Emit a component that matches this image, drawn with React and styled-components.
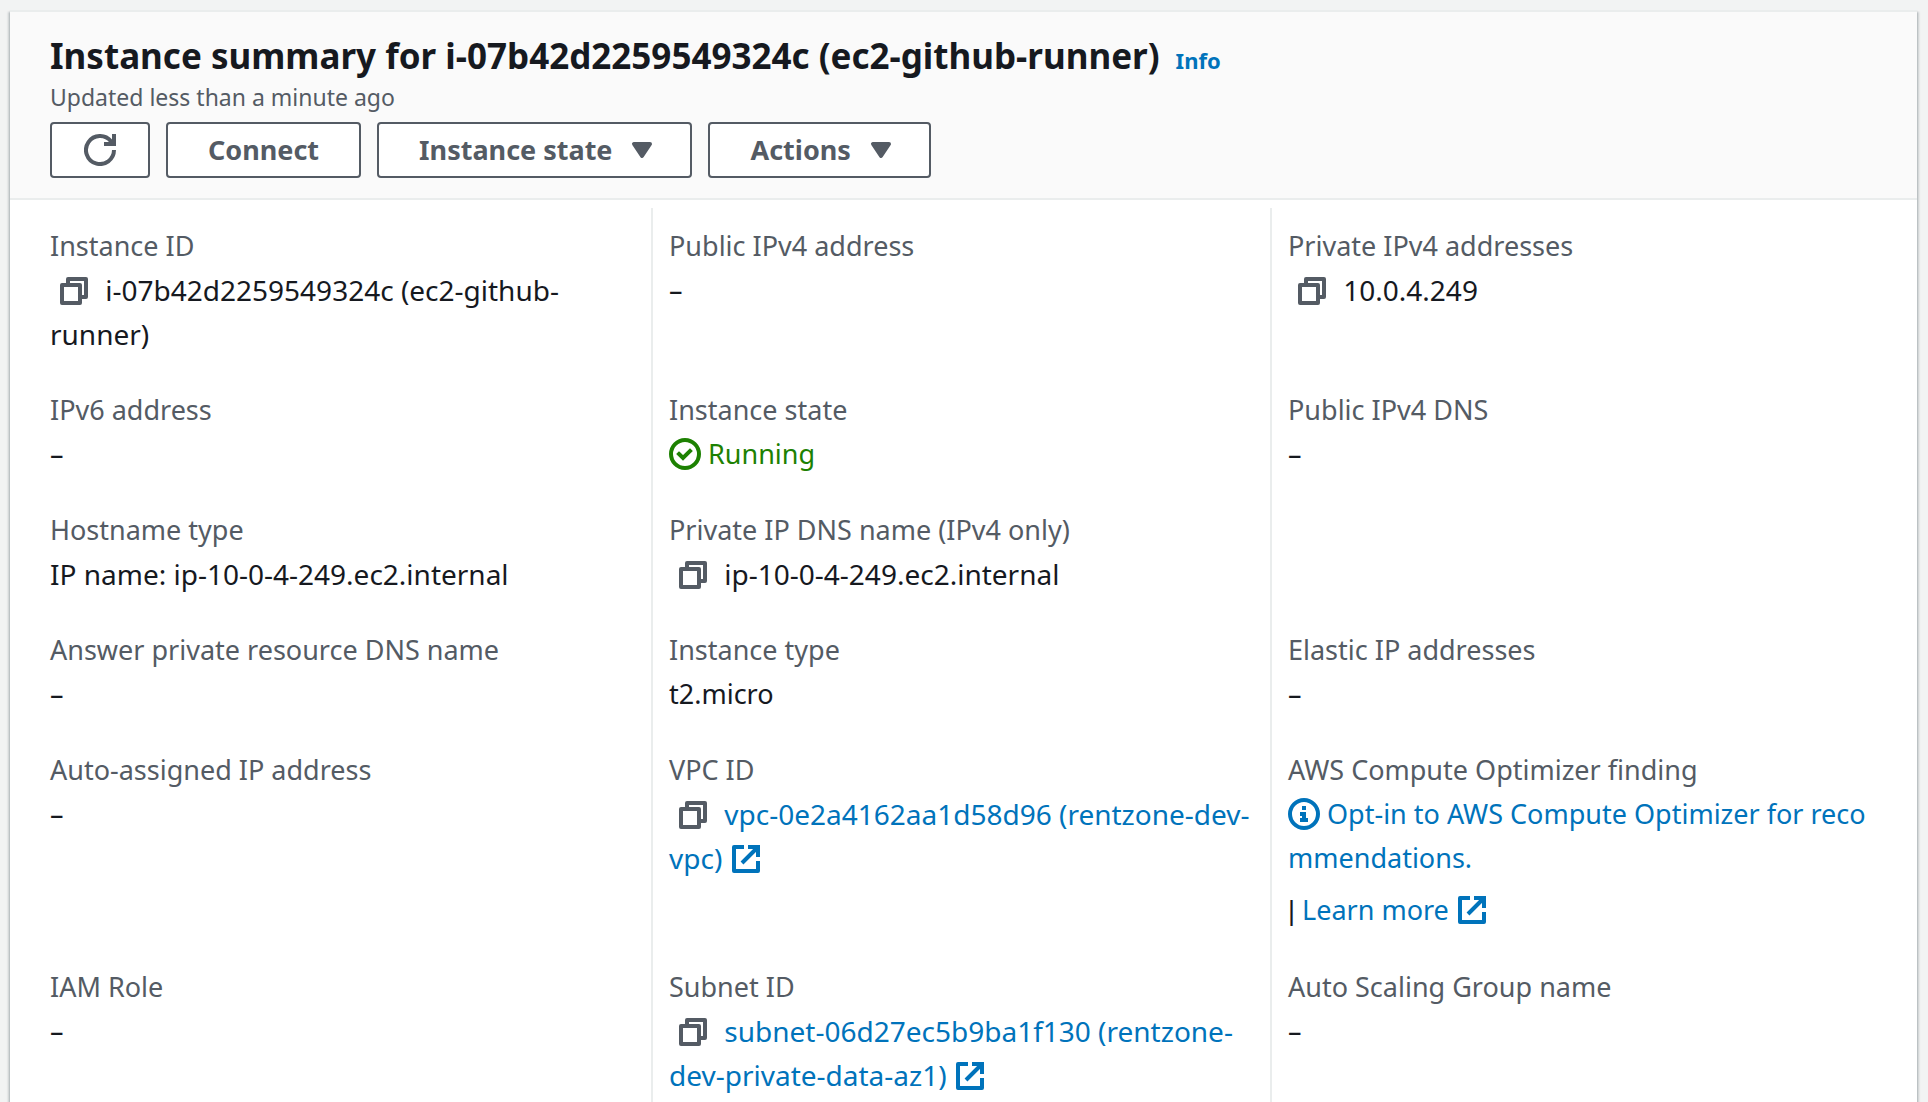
import React from "react";
import styled, { createGlobalStyle } from "styled-components";

const GlobalStyle = createGlobalStyle`
  *, *::before, *::after { box-sizing: border-box; }
  body {
    margin: 0;
    background: #f2f3f3;
    color: #16191f;
    font-family: "Noto Sans", "Open Sans", sans-serif;
    font-size: 27px;
    line-height: 44px;
  }
`;

const Page = styled.main`
  height: 100vh;
  overflow: hidden;
  padding: 10px 11px 0 10px;
`;

const Panel = styled.section`
  min-height: 100%;
  background: #ffffff;
  border-top: 2px solid #eaeded;
  box-shadow:
    0 2px 2px rgba(0, 28, 36, 0.3),
    2px 2px 2px rgba(0, 28, 36, 0.15),
    -2px 2px 2px rgba(0, 28, 36, 0.15);
`;

const Header = styled.header`
  padding: 22px 40px 20px;
  background: #fafafa;
  border-bottom: 2px solid #eaeded;
`;

const TitleRow = styled.div`
  display: flex;
  align-items: baseline;
  gap: 16px;
`;

const Title = styled.h1`
  margin: 0;
  font-size: 35px;
  font-weight: 700;
  line-height: 44px;
`;

const Link = styled.a`
  color: #0073bb;
  text-decoration: none;
  word-break: ${(p) => (p.$breakAll ? "break-all" : "normal")};
`;

const InfoLink = styled(Link)`
  font-size: 22px;
  font-weight: 700;
  line-height: 24px;
`;

const Updated = styled.p`
  margin: 0;
  color: #545b64;
  font-size: 23px;
  line-height: 38px;
`;

const Toolbar = styled.div`
  display: flex;
  flex-wrap: wrap;
  gap: 16px;
  margin-top: 6px;
`;

const Button = styled.button`
  display: inline-flex;
  align-items: center;
  gap: 14px;
  height: 56px;
  padding: 0 ${(p) => (p.$endIcon || p.$iconOnly ? "32px" : "40px")} 0
    ${(p) => (p.$iconOnly ? "32px" : "40px")};
  border: 2px solid #545b64;
  border-radius: 4px;
  background: #ffffff;
  color: #545b64;
  font: inherit;
  font-weight: 700;
  cursor: pointer;
`;

const Grid = styled.dl`
  display: grid;
  grid-template-columns: repeat(3, minmax(0, 1fr));
  margin: 0;
  padding: 8px 28px 8px 22px;
`;

const Cell = styled.div`
  padding: 16px 12px 16px 16px;
  border-left: 2px solid #eaeded;

  &:nth-child(3n + 1) {
    border-left-color: transparent;
  }
`;

const Label = styled.dt`
  color: #545b64;
`;

const Value = styled.dd`
  margin: 0;
  font-size: ${(p) => (p.$identifier ? "28px" : "27px")};
`;

const Status = styled.span`
  color: #1d8102;
`;

const LearnMore = styled.div`
  margin-top: 8px;
`;

const Separator = styled.span`
  font-family: "Liberation Sans", Arial, sans-serif;
`;

const IconButton = styled.button`
  padding: 0 8px;
  border: 0;
  background: none;
  color: #545b64;
  font: inherit;
  line-height: 32px;
  cursor: pointer;
`;

const Svg = styled.svg`
  width: 32px;
  height: 32px;
  flex: none;
  vertical-align: -6px;
  fill: none;
  stroke: currentColor;
  stroke-width: 2;
`;

const Icon = ({ children }) => (
  <Svg viewBox="0 0 16 16" aria-hidden="true">
    {children}
  </Svg>
);

const RefreshIcon = () => (
  <Icon>
    <path d="M10 5h5V0" />
    <path d="M15 8a7 7 0 1 1-1.500-4.330L14.600 5" />
  </Icon>
);

const CaretIcon = () => (
  <Icon>
    <path d="M4 5h8l-4 6z" fill="currentColor" strokeLinejoin="round" />
  </Icon>
);

const CopyIcon = () => (
  <Icon>
    <path d="M2 5h9v9H2z" strokeLinejoin="round" />
    <path d="M5 5V2h9v9h-3" strokeLinejoin="round" />
  </Icon>
);

const ExternalIcon = () => (
  <Icon>
    <path d="M7 2H2v12h12V9" strokeLinejoin="round" />
    <path d="M9 2h5v5M14 2l-8 8" />
  </Icon>
);

const CheckIcon = () => (
  <Icon>
    <circle cx="8" cy="8" r="7" />
    <path d="M5 8l2 2 3.500-3.500" strokeLinecap="square" />
  </Icon>
);

const InfoIcon = () => (
  <Icon>
    <circle cx="8" cy="8" r="7" />
    <path d="M8 11V8H6M6 11h4M8 6V4" />
  </Icon>
);

const Copy = ({ children, what }) => (
  <>
    <IconButton type="button" aria-label={`Copy ${what}`}>
      <CopyIcon />
    </IconButton>{" "}
    {children}
  </>
);

const fields = [
  {
    label: "Instance ID",
    identifier: true,
    value: <Copy what="instance ID">i-07b42d2259549324c (ec2-github-runner)</Copy>,
  },
  { label: "Public IPv4 address", value: "–" },
  {
    label: "Private IPv4 addresses",
    identifier: true,
    value: <Copy what="private IPv4 address">10.0.4.249</Copy>,
  },
  { label: "IPv6 address", value: "–" },
  {
    label: "Instance state",
    value: (
      <Status>
        <CheckIcon /> Running
      </Status>
    ),
  },
  { label: "Public IPv4 DNS", value: "–" },
  {
    label: "Hostname type",
    identifier: true,
    value: "IP name: ip-10-0-4-249.ec2.internal",
  },
  {
    label: "Private IP DNS name (IPv4 only)",
    identifier: true,
    value: <Copy what="private DNS name">ip-10-0-4-249.ec2.internal</Copy>,
  },
  null,
  { label: "Answer private resource DNS name", value: "–" },
  { label: "Instance type", value: "t2.micro" },
  { label: "Elastic IP addresses", value: "–" },
  { label: "Auto-assigned IP address", value: "–" },
  {
    label: "VPC ID",
    identifier: true,
    value: (
      <Copy what="VPC ID">
        <Link href="#vpc">
          vpc-0e2a4162aa1d58d96 (rentzone-dev-vpc) <ExternalIcon />
        </Link>
      </Copy>
    ),
  },
  {
    label: "AWS Compute Optimizer finding",
    value: (
      <>
        <Link href="#optimizer" $breakAll>
          <InfoIcon /> Opt-in to AWS Compute Optimizer for recommendations.
        </Link>
        <LearnMore>
          <Separator>|</Separator>{" "}
          <Link href="#learn-more">
            Learn more <ExternalIcon />
          </Link>
        </LearnMore>
      </>
    ),
  },
  { label: "IAM Role", value: "–" },
  {
    label: "Subnet ID",
    identifier: true,
    value: (
      <Copy what="subnet ID">
        <Link href="#subnet">
          subnet-06d27ec5b9ba1f130 (rentzone-dev-private-data-az1) <ExternalIcon />
        </Link>
      </Copy>
    ),
  },
  { label: "Auto Scaling Group name", value: "–" },
];

export default function App() {
  return (
    <>
      <GlobalStyle />
      <Page>
        <Panel>
          <Header>
            <TitleRow>
              <Title>Instance summary for i-07b42d2259549324c (ec2-github-runner)</Title>
              <InfoLink href="#info">Info</InfoLink>
            </TitleRow>
            <Updated>Updated less than a minute ago</Updated>
            <Toolbar>
              <Button type="button" aria-label="Refresh" $iconOnly>
                <RefreshIcon />
              </Button>
              <Button type="button">Connect</Button>
              <Button type="button" aria-haspopup="menu" $endIcon>
                Instance state
                <CaretIcon />
              </Button>
              <Button type="button" aria-haspopup="menu" $endIcon>
                Actions
                <CaretIcon />
              </Button>
            </Toolbar>
          </Header>
          <Grid>
            {fields.map((field, index) => (
              <Cell key={index}>
                {field && (
                  <>
                    <Label>{field.label}</Label>
                    <Value $identifier={field.identifier}>{field.value}</Value>
                  </>
                )}
              </Cell>
            ))}
          </Grid>
        </Panel>
      </Page>
    </>
  );
}
